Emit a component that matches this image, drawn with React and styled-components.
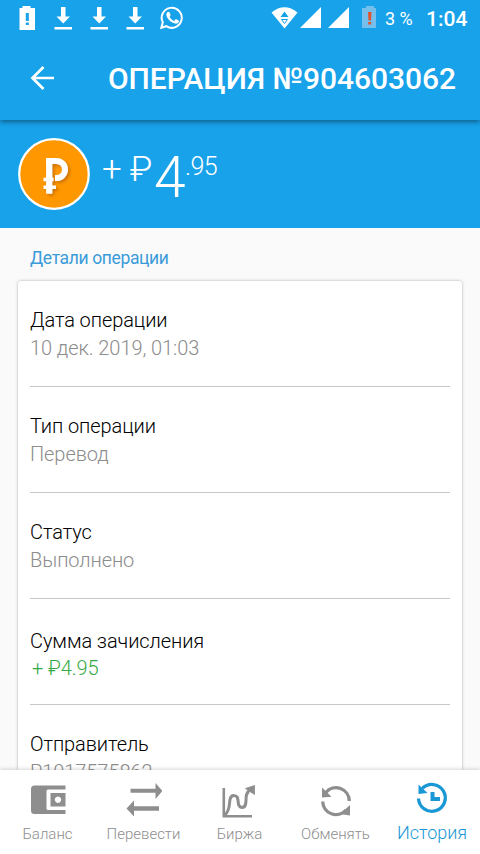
import React from 'react';
import styled, { createGlobalStyle } from 'styled-components';

const GlobalStyle = createGlobalStyle`
  * {
    box-sizing: border-box;
  }
  body {
    margin: 0;
    overflow: hidden;
    font-family: Roboto, "Noto Sans", sans-serif;
  }
`;

const Screen = styled.div`
  width: 480px;
  height: 854px;
  display: flex;
  flex-direction: column;
  overflow: hidden;
  background: #fafafa;
`;

const Header = styled.header`
  position: relative;
  flex: none;
  height: 120px;
  color: #fff;
  background: #18a2ea;
  box-shadow: 0 2px 5px rgba(0, 0, 0, 0.42);
`;

const StatusBar = styled.div`
  height: 36px;
  display: flex;
  justify-content: space-between;
`;

const StatusIcons = styled.svg`
  display: block;
`;

const StatusRight = styled.div`
  display: flex;
  white-space: nowrap;
`;

const StatusText = styled.span`
  width: ${(props) => props.$width}px;
  font-size: ${(props) => props.$size}px;
  font-weight: ${(props) => props.$weight || 400};
  line-height: 38px;
`;

const Toolbar = styled.div`
  height: 84px;
  padding-left: 30px;
  display: flex;
  align-items: center;
`;

const Title = styled.h1`
  margin: 2px 0 0 53px;
  font-size: 30px;
  font-weight: 500;
  line-height: 36px;
  letter-spacing: -0.07px;
  white-space: nowrap;
`;

const Summary = styled.section`
  flex: none;
  height: 108px;
  padding: 18px 0 0 18px;
  display: flex;
  color: #fff;
  background: #18a2ea;
`;

const Amount = styled.div`
  display: flex;
  align-items: flex-start;
  margin: 1px 0 0 12px;
  font-weight: 300;
  white-space: nowrap;
`;

const Sign = styled.span`
  width: 52px;
  padding-top: 11px;
  font-size: 35px;
  line-height: 40px;
  letter-spacing: -0.3px;
`;

const Whole = styled.span`
  width: 31px;
  padding-top: 6px;
  font-size: 57px;
  line-height: 66px;
`;

const Fraction = styled.span`
  padding-top: 13px;
  font-size: 25px;
  line-height: 30px;
  letter-spacing: -0.6px;
`;

const SectionTitle = styled.h2`
  flex: none;
  height: 53px;
  margin: 0;
  padding: 18px 0 0 30px;
  color: #3a9bd9;
  font-size: 17.5px;
  font-weight: 400;
  line-height: 24px;
  letter-spacing: -0.36px;
`;

const Card = styled.main`
  flex: 1;
  min-height: 0;
  margin: 0 18px;
  padding: 0 12px;
  overflow: hidden;
  background: #fff;
  border-radius: 3px 3px 0 0;
  box-shadow: 0 0 3px rgba(0, 0, 0, 0.32);
`;

const Row = styled.div`
  height: 106px;
  padding-top: ${(props) => (props.$positive ? 28 : 25)}px;
  border-bottom: 1px solid #c8c8c8;
`;

const Label = styled.div`
  color: #000;
  font-size: 20px;
  font-weight: 350;
  line-height: 28px;
  letter-spacing: -0.08px;
`;

const Value = styled.div`
  margin-left: ${(props) => (props.$positive ? 2 : 0)}px;
  color: ${(props) => (props.$positive ? '#35a945' : '#8c8c8c')};
  font-size: 20px;
  font-weight: ${(props) => (props.$positive ? 350 : 300)};
  line-height: ${(props) => (props.$positive ? 26 : 28)}px;
  letter-spacing: -0.07px;
`;

const Nav = styled.nav`
  position: relative;
  flex: none;
  height: 84px;
  display: grid;
  grid-template-columns: repeat(5, 1fr);
  background: #fff;
  box-shadow: 0 -1px 4px rgba(0, 0, 0, 0.16);
`;

const NavItem = styled.a`
  display: flex;
  flex-direction: column;
  align-items: center;
  padding-top: ${(props) => (props.$active ? 10 : 12)}px;
  padding-right: ${(props) => (props.$active ? 0 : 1)}px;
  color: ${(props) => (props.$active ? '#1a98d5' : '#8e8e8e')};
  font-size: ${(props) => (props.$active ? 18 : 15)}px;
  font-weight: ${(props) => (props.$active ? 350 : 300)};
  line-height: 24px;
  white-space: nowrap;
`;

const NavIcon = styled.svg`
  display: block;
  flex: none;
  margin-bottom: ${(props) => (props.$active ? 5 : 4)}px;
`;

const details = [
  { label: 'Дата операции', value: '10 дек. 2019, 01:03' },
  { label: 'Тип операции', value: 'Перевод' },
  { label: 'Статус', value: 'Выполнено' },
  { label: 'Сумма зачисления', value: '+ ₽4.95', positive: true },
  { label: 'Отправитель', value: 'P1017575862' },
];

const Download = ({ x }) => (
  <g transform={`translate(${x} 0)`}>
    <path d="M6.500 7h4.500v9.500h4.500l-6.750 7-6.750-7h4.500zM0 27h17.500v2.500H0z" />
  </g>
);

const NotificationIcons = () => (
  <StatusIcons width="190" height="36" fill="#fff">
    <path d="M22.500 6h8v2h4.500v22H19.500V8h3z" />
    <path d="M25.800 13h3v8h-3zM25.800 22.500h3v2.500h-3z" fill="#18a2ea" />
    <Download x={54.5} />
    <Download x={90.5} />
    <Download x={126.5} />
    <path
      d="M162.800 22.300A10 10 0 1 1 166.300 26.200L161.300 27.800z"
      fill="none"
      stroke="#fff"
      strokeWidth="2"
    />
    <path d="M167.300 12.300c1-1 1.800-.8 2.300.2l.9 2.200c.2.600-.2 1.100-.9 2 1 2 2.400 3.300 4.500 4.200l1.200-1.400c.4-.4.700-.4 1.100-.2l2.200 1.100c.6.300.5.700.3 1.300-.6 1.500-2.300 2.200-3.800 1.900-4.300-.8-8.200-4.800-8.700-8.500-.2-1.200.3-2.200.9-2.800z" />
  </StatusIcons>
);

const SignalIcons = () => (
  <StatusIcons width="114" height="36" fill="#fff">
    <path d="M.5 12.500Q13.500 2 26.500 12.500L13.500 28.500z" />
    <path d="M13.500 11.500l4 5.500h-8z" fill="#18a2ea" />
    <path d="M10.500 19.500h6l-3 4z" fill="none" stroke="#18a2ea" strokeWidth="1" />
    <path d="M50 7v21H29zM78 7v21H57z" />
    <path d="M95 6h8v2h2v20H91V8h4z" fill="#74bfec" />
    <path d="M97 12h3.500l-.5 8.500h-2.500zM97.200 22h3v2.500h-3z" fill="#e0532f" />
  </StatusIcons>
);

const BackIcon = () => (
  <svg width="25" height="26" fill="none" stroke="#fff" strokeWidth="2.700">
    <path d="M24 13H3M13.500 2L2.500 13l11 11" />
  </svg>
);

const CoinIcon = () => (
  <svg width="72" height="72" viewBox="0 0 72 72">
    <defs>
      <filter id="coinShadow" x="-30%" y="-30%" width="170%" height="170%">
        <feDropShadow dx="2" dy="2" stdDeviation="1.800" floodColor="#a65400" floodOpacity="0.550" />
      </filter>
    </defs>
    <circle cx="36" cy="36" r="34.800" fill="#ff9800" stroke="#fff" strokeWidth="2.200" />
    <g filter="url(#coinShadow)" fill="none" stroke="#fff">
      <path d="M28 23H38.500a8.500 8.500 0 0 1 0 17H37" strokeWidth="6" />
      <path d="M31.200 20.500V55.700" strokeWidth="6.200" />
      <path d="M25.500 41.500H35.500M25.500 49.300H38" strokeWidth="3.500" />
    </g>
  </svg>
);

const WalletIcon = () => (
  <NavIcon width="36" height="36" fill="currentColor">
    <path d="M4.500 3.500h31v4H18q-1.500 0-1.500 1.500v17.500q0 1.500 1.500 1.500h17.500v4H4.500Q1 32 1 28.500V7Q1 3.500 4.500 3.500z" />
    <path fillRule="evenodd" d="M20.500 11h15v13.500h-15zM28 14.500a3.200 3.200 0 1 0 .01 0z" />
  </NavIcon>
);

const TransferIcon = () => (
  <NavIcon width="36" height="36" fill="currentColor">
    <path d="M4.500 6.700h25V1l7 8-7 8v-6.200h-25zM33 24.200H8V18.500l-7.500 8 7.500 8V28.700h25z" />
  </NavIcon>
);

const ExchangeIcon = () => (
  <NavIcon width="36" height="36" viewBox="1 0 36 36" fill="none" stroke="currentColor" strokeWidth="2.600">
    <path d="M2.800 6v28.200H31" />
    <path d="M3.500 33.500C9.500 28 8 22 9 17.500c1.200-5.500 7.500-5 8 .5.300 3-.2 7.500 4 7.500 5 0 3.700-7 4.200-11 .2-2.500 1.300-5 3.800-6.500" strokeWidth="3" />
    <path d="M24.500 6.500l9-3V12.500z" fill="currentColor" strokeWidth="0.800" />
  </NavIcon>
);

const SwapIcon = () => (
  <NavIcon width="36" height="36" viewBox="0.500 0 36 36" fill="none" stroke="currentColor" strokeWidth="3.300">
    <path d="M31.800 19A13.300 13.300 0 0 0 8.300 10.500M5.200 19.500A13.300 13.300 0 0 0 28.500 28" />
    <path d="M4.500 5.500v10l9.500-.8zM32.500 23v10.500L22.500 32z" fill="currentColor" stroke="none" />
  </NavIcon>
);

const HistoryIcon = () => (
  <NavIcon $active width="36" height="36" fill="none" stroke="currentColor" strokeWidth="3.300">
    <path d="M4.500 18.500A13.400 13.400 0 1 0 8.300 8.500" />
    <path d="M4.500 4.500v9.500l9-1z" fill="currentColor" stroke="none" />
    <path d="M18.500 12v7H26" strokeWidth="4" />
  </NavIcon>
);

const tabs = [
  { label: 'Баланс', Icon: WalletIcon },
  { label: 'Перевести', Icon: TransferIcon },
  { label: 'Биржа', Icon: ExchangeIcon },
  { label: 'Обменять', Icon: SwapIcon },
  { label: 'История', Icon: HistoryIcon, active: true },
];

const App = () => {
  return (
    <Screen>
      <GlobalStyle />
      <Header>
        <StatusBar>
          <NotificationIcons />
          <StatusRight>
            <SignalIcons />
            <StatusText $width={41} $size={18}>3 %</StatusText>
            <StatusText $width={54} $size={21} $weight={500}>1:04</StatusText>
          </StatusRight>
        </StatusBar>
        <Toolbar>
          <BackIcon />
          <Title>ОПЕРАЦИЯ №904603062</Title>
        </Toolbar>
      </Header>
      <Summary>
        <CoinIcon />
        <Amount>
          <Sign>+ ₽</Sign>
          <Whole>4</Whole>
          <Fraction>.95</Fraction>
        </Amount>
      </Summary>
      <SectionTitle>Детали операции</SectionTitle>
      <Card>
        {details.map(({ label, value, positive }) => (
          <Row key={label} $positive={positive}>
            <Label>{label}</Label>
            <Value $positive={positive}>{value}</Value>
          </Row>
        ))}
      </Card>
      <Nav>
        {tabs.map(({ label, Icon, active }) => (
          <NavItem key={label} $active={active}>
            <Icon />
            {label}
          </NavItem>
        ))}
      </Nav>
    </Screen>
  );
};

export default App;
